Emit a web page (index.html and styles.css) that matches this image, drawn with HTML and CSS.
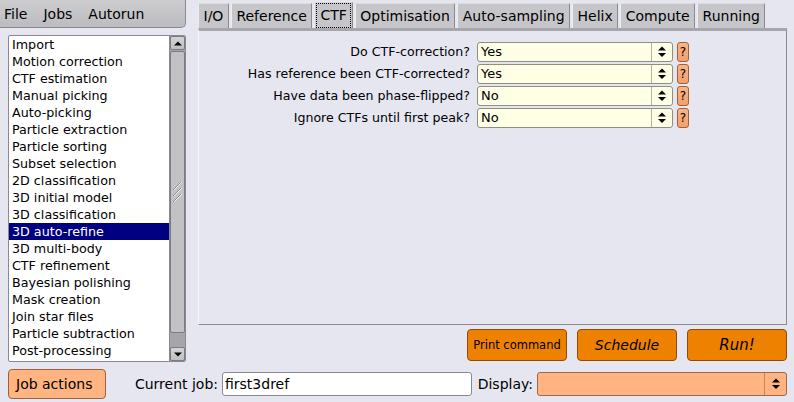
FILE: index.html
```html
<!DOCTYPE html>
<html lang="en">
<head>
  <meta charset="UTF-8" />
  <title>RELION</title>
  <link rel="stylesheet" href="styles.css">
</head>
<body>

  <div class="top">
    <!-- Menu + lista de jobs -->
    <div class="side">
      <div class="menubar">
        <span>File</span>
        <span>Jobs</span>
        <span>Autorun</span>
      </div>

      <div class="joblist">
        <ul class="jobs">
          <li>Import</li>
          <li>Motion correction</li>
          <li>CTF estimation</li>
          <li>Manual picking</li>
          <li>Auto-picking</li>
          <li>Particle extraction</li>
          <li>Particle sorting</li>
          <li>Subset selection</li>
          <li>2D classification</li>
          <li>3D initial model</li>
          <li>3D classification</li>
          <li class="sel">3D auto-refine</li>
          <li>3D multi-body</li>
          <li>CTF refinement</li>
          <li>Bayesian polishing</li>
          <li>Mask creation</li>
          <li>Join star files</li>
          <li>Particle subtraction</li>
          <li>Post-processing</li>
        </ul>
        <div class="scrollbar">
          <div class="sb-btn">
            <svg width="8" height="5" viewBox="0 0 8 5"><path d="M0 4.5 L4 0.5 L8 4.5 Z" fill="#000"/></svg>
          </div>
          <div class="sb-thumb">
            <svg width="9" height="20" viewBox="0 0 9 20">
              <path d="M0 8 L8 0 M0 14 L8 6 M0 20 L8 12" stroke="#8a8a8e" stroke-width="1"/>
              <path d="M1 8 L9 0 M1 14 L9 6 M1 20 L9 12" stroke="#f0f0f0" stroke-width="1"/>
            </svg>
          </div>
          <div class="sb-track"></div>
          <div class="sb-btn">
            <svg width="8" height="5" viewBox="0 0 8 5"><path d="M0 0.5 L8 0.5 L4 4.5 Z" fill="#000"/></svg>
          </div>
        </div>
      </div>
    </div>

    <!-- Abas e parametros -->
    <div class="content">
      <div class="tabs">
        <div class="tab">I/O</div>
        <div class="tab">Reference</div>
        <div class="tab active"><span>CTF</span></div>
        <div class="tab">Optimisation</div>
        <div class="tab">Auto-sampling</div>
        <div class="tab">Helix</div>
        <div class="tab">Compute</div>
        <div class="tab">Running</div>
      </div>

      <div class="panel">
        <div class="row">
          <label>Do CTF-correction?</label>
          <div class="choice"><span class="val">Yes</span><span class="arrows"><svg width="8" height="12" viewBox="0 0 8 12"><path d="M4 0.5 L8 4.5 H0 Z M0 7 H8 L4 11 Z" fill="#000"/></svg></span></div>
          <button class="help">?</button>
        </div>
        <div class="row">
          <label>Has reference been CTF-corrected?</label>
          <div class="choice"><span class="val">Yes</span><span class="arrows"><svg width="8" height="12" viewBox="0 0 8 12"><path d="M4 0.5 L8 4.5 H0 Z M0 7 H8 L4 11 Z" fill="#000"/></svg></span></div>
          <button class="help">?</button>
        </div>
        <div class="row">
          <label>Have data been phase-flipped?</label>
          <div class="choice"><span class="val">No</span><span class="arrows"><svg width="8" height="12" viewBox="0 0 8 12"><path d="M4 0.5 L8 4.5 H0 Z M0 7 H8 L4 11 Z" fill="#000"/></svg></span></div>
          <button class="help">?</button>
        </div>
        <div class="row">
          <label>Ignore CTFs until first peak?</label>
          <div class="choice"><span class="val">No</span><span class="arrows"><svg width="8" height="12" viewBox="0 0 8 12"><path d="M4 0.5 L8 4.5 H0 Z M0 7 H8 L4 11 Z" fill="#000"/></svg></span></div>
          <button class="help">?</button>
        </div>
      </div>

      <div class="runbar">
        <button class="run-btn small">Print command</button>
        <button class="run-btn italic">Schedule</button>
        <button class="run-btn italic big">Run!</button>
      </div>
    </div>
  </div>

  <!-- Linha de baixo -->
  <div class="bottom">
    <button class="job-actions">Job actions</button>
    <span class="field-label cur-label">Current job:</span>
    <input type="text" class="job-input" value="first3dref" />
    <span class="field-label disp-label">Display:</span>
    <div class="display">
      <span class="arrows"><svg width="8" height="12" viewBox="0 0 8 12"><path d="M4 0.5 L8 4.5 H0 Z M0 7 H8 L4 11 Z" fill="#000"/></svg></span>
    </div>
  </div>

</body>
</html>
```

FILE: styles.css
```css
body {
  margin: 0;
  width: 794px;
  height: 402px;
  overflow: hidden;
  background: #e6e6f0;
  color: #000;
  font-family: "DejaVu Sans", sans-serif;
}

button {
  font-family: "DejaVu Sans", sans-serif;
  color: #000;
  cursor: pointer;
}

.top {
  display: flex;
  height: 362px;
}

/* ---- lado esquerdo ---- */

.side {
  width: 198px;
  flex: none;
  display: flex;
  flex-direction: column;
}

.menubar {
  width: 186px;
  height: 28px;
  box-sizing: border-box;
  display: flex;
  align-items: center;
  gap: 16px;
  padding-left: 4px;
  font-size: 14px;
  background: linear-gradient(#cdcdd0, #bcbcc0);
  border-right: 1px solid #8a8a8e;
  border-bottom: 1px solid #8a8a8e;
  border-bottom-right-radius: 5px;
}

.joblist {
  margin: 7px 12px 0 8px;
  height: 327px;
  box-sizing: border-box;
  display: flex;
  background: #fff;
  border: 1px solid #8a8a8e;
  border-radius: 2px;
}

.jobs {
  list-style: none;
  margin: 0;
  padding: 0;
  flex: 1;
  font-size: 12.7px;
}

.jobs li {
  height: 17px;
  line-height: 17px;
  padding-left: 3px;
  white-space: nowrap;
}

.jobs li.sel {
  background: #000080;
  color: #fff;
}

.scrollbar {
  width: 15px;
  display: flex;
  flex-direction: column;
  background: #a6a6aa;
  border-left: 1px solid #8a8a8e;
}

.sb-btn {
  height: 14px;
  flex: none;
  box-sizing: border-box;
  display: flex;
  align-items: center;
  justify-content: center;
  background: linear-gradient(#d4d4d6, #c0c0c2);
  border: 1px solid #7c7c80;
  border-radius: 2px;
}

.sb-thumb {
  height: 282px;
  margin-top: 1px;
  flex: none;
  box-sizing: border-box;
  display: flex;
  align-items: center;
  justify-content: center;
  background: #c2c2c4;
  border: 1px solid #7c7c80;
  border-radius: 2px;
}

.sb-track {
  flex: 1;
}

/* ---- abas ---- */

.content {
  width: 589px;
  display: flex;
  flex-direction: column;
}

.tabs {
  height: 28px;
  box-sizing: border-box;
  display: flex;
  align-items: flex-end;
  gap: 2px;
  font-size: 14px;
}

.tab {
  height: 25px;
  box-sizing: border-box;
  padding: 0 4.5px;
  line-height: 24px;
  white-space: nowrap;
  background: #c6c6ca;
  border-top: 1px solid #dcdce0;
  border-left: 1px solid #ececf0;
  border-right: 1px solid #8a8a8e;
}

.tab.active {
  height: 26px;
  padding: 0 1px;
}

.tab.active span {
  display: block;
  height: 23px;
  line-height: 22px;
  padding: 0 3px;
  border: 1px dotted #000;
}

.panel {
  height: 297px;
  box-sizing: border-box;
  padding-top: 11px;
  border-top: 3px solid #a6a6ac;
  border-left: 1px solid #f6f6fa;
  border-right: 1px solid #8a8a90;
  border-bottom: 1px solid #8a8a90;
}

.row {
  display: flex;
  height: 20px;
  margin-bottom: 2px;
}

.row label {
  width: 278px;
  box-sizing: border-box;
  padding-right: 7px;
  text-align: right;
  font-size: 12.6px;
  line-height: 20px;
  white-space: nowrap;
}

.choice {
  width: 196px;
  box-sizing: border-box;
  display: flex;
  background: #ffffe6;
  border: 1px solid #8e8e84;
  border-radius: 3px;
  font-size: 13px;
}

.choice .val {
  flex: 1;
  padding-left: 3px;
  line-height: 18px;
}

.arrows {
  width: 20px;
  flex: none;
  display: flex;
  align-items: center;
  justify-content: center;
  border-left: 1px solid #b4b4a8;
}

.help {
  width: 12px;
  margin-left: 4px;
  padding: 0;
  font-size: 12px;
  line-height: 18px;
  background: linear-gradient(#f8b488, #f2a06c);
  border: 1px solid #a4602e;
  border-radius: 3px;
}

.runbar {
  display: flex;
  justify-content: flex-end;
  gap: 10px;
  margin-top: 4px;
}

.run-btn {
  width: 100px;
  height: 32px;
  padding: 0;
  background: #ee8200;
  border: 1px solid #8c4c10;
  border-radius: 4px;
}

.run-btn.small {
  font-size: 11.5px;
}

.run-btn.italic {
  font-style: italic;
  font-size: 14px;
}

.run-btn.big {
  font-size: 15px;
}

/* ---- linha de baixo ---- */

.bottom {
  display: flex;
  align-items: center;
  height: 30px;
  margin-top: 7px;
}

.job-actions {
  width: 98px;
  height: 30px;
  margin-left: 8px;
  padding: 0 0 0 7px;
  text-align: left;
  font-size: 14px;
  background: #ffb482;
  border: 1px solid #9c6040;
  border-radius: 4px;
}

.field-label {
  box-sizing: border-box;
  padding-right: 4px;
  text-align: right;
  font-size: 14px;
}

.cur-label {
  width: 116px;
}

.disp-label {
  width: 65px;
}

.job-input {
  width: 250px;
  height: 24px;
  box-sizing: border-box;
  padding: 0 0 0 2px;
  font-family: "DejaVu Sans", sans-serif;
  font-size: 14px;
  background: #fff;
  border: 1px solid #8a8a8e;
  border-radius: 3px;
  outline: none;
}

.display {
  width: 250px;
  height: 24px;
  box-sizing: border-box;
  display: flex;
  justify-content: flex-end;
  background: #ffb482;
  border: 1px solid #9c6a4a;
  border-radius: 3px;
}

.display .arrows {
  width: 21px;
  border-left: 1px solid #c8865a;
}
```
